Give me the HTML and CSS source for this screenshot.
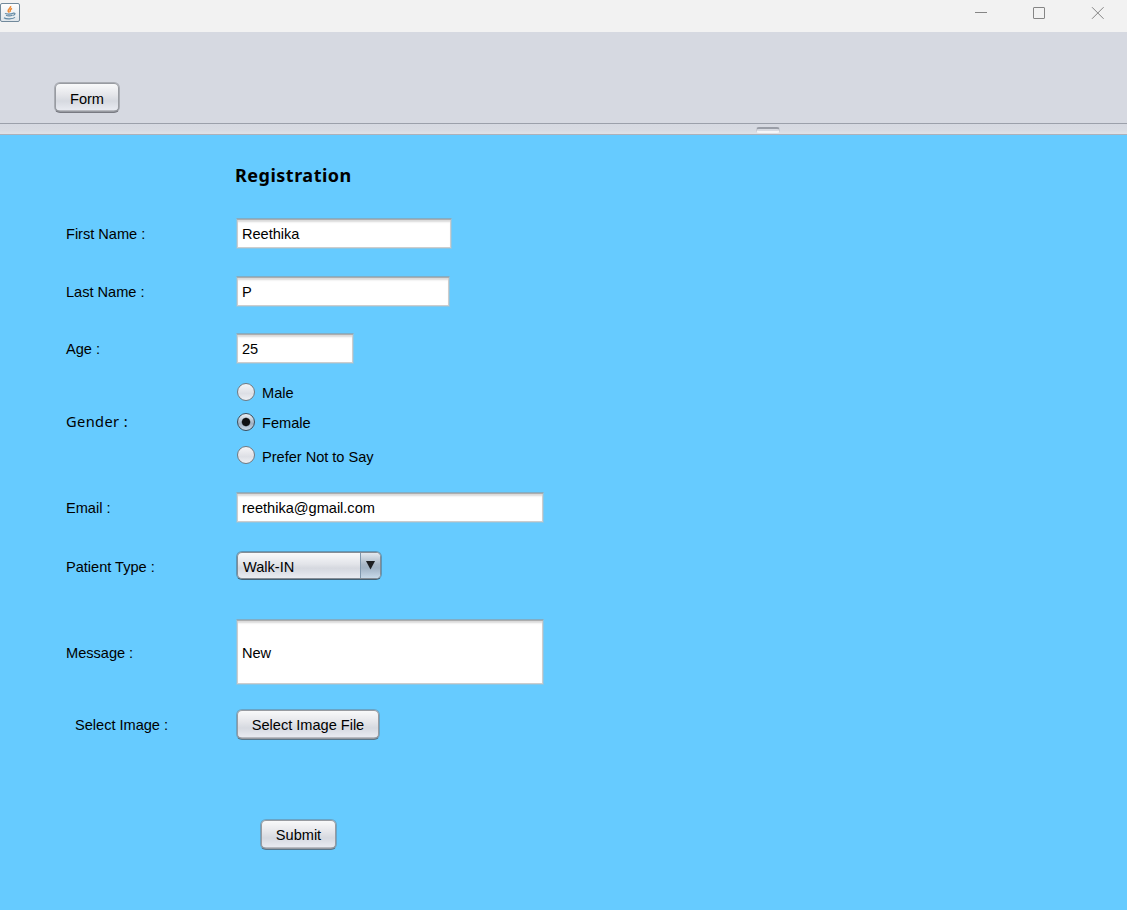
FILE: index.html
```html
<!DOCTYPE html>
<html lang="en">
<head>
<meta charset="utf-8">
<title>Registration</title>
<link rel="stylesheet" href="styles.css">
</head>
<body>
<div class="window">
  <header class="titlebar">
    <svg class="app-icon" width="20" height="20" viewBox="0 0 20 20">
      <defs><linearGradient id="ic" x1="0" y1="0" x2="0" y2="1"><stop offset="0" stop-color="#fff"/><stop offset="1" stop-color="#dfe5ea"/></linearGradient></defs>
      <rect x=".5" y=".5" width="19" height="18" rx="1.5" fill="url(#ic)" stroke="#71899b"/>
      <path d="M10.6 3C11.3 5 7.3 6 8.2 8.3L9.4 9.6M12 5.4C9.8 6.7 9.9 7.8 10.6 8.8" fill="none" stroke="#ee8b37" stroke-width="1.5"/>
      <path d="M5 10.4C6 11.3 11 11.2 13 10.4M13 10.2C16 9.5 15.5 12 12.5 12.5M6 12.3C8 13.3 11 13 12 12.2M4 14.7C6 16.4 13 16.1 15 14.4" fill="none" stroke="#6289a4" stroke-width="1.2"/>
    </svg>
    <svg class="controls" width="131" height="14" viewBox="0 0 131 14" fill="none" stroke="#858585">
      <path d="M0 6.5H12"/>
      <rect x="58.5" y="1.5" width="11" height="11" rx=".5"/>
      <path d="M117 1.2L128.6 12.8M128.6 1.2L117 12.8"/>
    </svg>
  </header>
  <nav class="toolbar"><button class="btn btn-form">Form</button></nav>
  <div class="divider"><span class="grip"></span></div>
  <main class="form">
    <h1 class="title">Registration</h1>
    <div class="row first"><label>First Name :</label><div class="field w-first"><span>Reethika</span></div></div>
    <div class="row last"><label>Last Name :</label><div class="field w-last"><span>P</span></div></div>
    <div class="row age"><label>Age :</label><div class="field w-age"><span>25</span></div></div>
    <div class="row gender">
      <label class="t-gender">Gender :</label>
      <div class="radios">
        <div class="option"><i class="radio"></i><span>Male</span></div>
        <div class="option"><i class="radio checked"></i><span>Female</span></div>
        <div class="option wide"><i class="radio"></i><span>Prefer Not to Say</span></div>
      </div>
    </div>
    <div class="row email"><label>Email :</label><div class="field w-full"><span>reethika@gmail.com</span></div></div>
    <div class="row type"><label>Patient Type :</label>
      <div class="combo"><span class="value">Walk-IN</span><span class="arrow"><svg width="9" height="9" viewBox="0 0 9 9"><path d="M0 0H9L4.5 8.5Z" fill="#1d1f22"/></svg></span></div></div>
    <div class="row message"><label>Message :</label><div class="field tall w-full"><span>New</span></div></div>
    <div class="row image"><label class="indent">Select Image :</label><button class="btn btn-image">Select Image File</button></div>
    <button class="btn btn-submit">Submit</button>
  </main>
</div>
</body>
</html>
```
FILE: styles.css
```css
* { box-sizing: border-box; }
body { margin: 0; font: 14.6px/18px "Liberation Sans", Arial, sans-serif; letter-spacing: -.02px; color: #000; }
.window { width: 1127px; height: 910px; display: flex; flex-direction: column; overflow: hidden; }
.titlebar { height: 32px; background: #f2f2f2; display: flex; justify-content: space-between; align-items: flex-start; }
.app-icon { margin-top: 3px; }
.controls { margin: 6px 21px 0 0; }
.toolbar { height: 91px; background: #d6d9e1; padding: 50px 0 0 54px; }
.btn {
  display: flex; align-items: center; justify-content: center; padding: 2px 0 0; height: 31px;
  font: inherit; letter-spacing: inherit; color: #000; white-space: nowrap;
  border: 1px solid rgba(110, 112, 120, .42); border-bottom-color: rgba(80, 82, 90, .7); border-radius: 6px;
  box-shadow: inset 0 0 0 1px #989ba1, inset 0 -2px 0 -.5px #85888e;
  background: linear-gradient(#fafbfc 0%, #e5e6ea 40%, #d6d9e0 62%, #eceef4 100%) padding-box;
}
.btn-form { width: 66px; }
.divider { height: 12px; background: linear-gradient(#d6d9e1, #d8dbe2 60%, #e0e2e7); border-top: 1px solid #9ba0aa; border-bottom: 1px solid #adb1ba; padding: 3px 0 0 756px; display: flex; }
.grip { width: 24px; height: 6px; border: 1px solid #c8cbd2; border-top: 2px solid #9a9ea7; border-bottom: 2px solid #f6f6f8; border-radius: 3px; }
.form { flex: 1; background: #66cbff; display: flex; flex-direction: column; padding-left: 66px; }
.title { margin: 27px 0 0 169px; font: bold 18px/26px "Noto Sans", sans-serif; letter-spacing: .5px; }
.row { display: flex; align-items: center; height: 31px; flex: none; }
.row label { width: 170px; flex: none; padding-top: 1px; white-space: nowrap; }
.row .indent { padding-left: 9px; }
.first { margin-top: 30px; }
.last { margin-top: 27px; }
.age { margin-top: 26px; }
.field {
  height: 31px; background: #fff padding-box; padding: 0 0 0 5px; display: flex; align-items: center; white-space: nowrap;
  border: 1px solid rgba(190, 190, 190, .4); border-top-color: rgba(150, 150, 150, .55);
  box-shadow: inset 0 1px 0 #adadad, inset 0 0 0 1px #cdcdcd, inset 0 3px 2px #dadada;
}
.tall { height: 66px; padding-top: 1px; }
.w-first { width: 216px; } .w-last { width: 214px; } .w-age { width: 118px; } .w-full { width: 308px; }
.gender { height: 94px; margin-top: 13px; }
.row .t-gender { font: 14.6px/18px "Noto Sans", sans-serif; padding: 0 0 6px; letter-spacing: .4px; }
.radios { height: 94px; padding-left: 1px; }
.option { display: flex; align-items: center; height: 30px; gap: 7px; white-space: nowrap; }
.option span { padding-top: 2px; }
.wide { height: 37px; }
.radio { width: 18px; height: 18px; border-radius: 50%; border: 1.5px solid #74797f; background: linear-gradient(#f5f5f7, #dddfe5 60%, #eef0f4); }
.wide .radio { margin-top: -1px; }
.checked { border-color: #3f4c59; background: radial-gradient(circle, #101214 0 3.6px, transparent 4.8px), linear-gradient(#eef3f8, #9fb0c2 60%, #cbdbe9); }
.email { margin-top: 21px; }
.type { margin-top: 27px; }
.type label { padding-top: 2px; }
.combo { width: 146px; height: 29px; padding: 1px; border: 1px solid rgba(80, 90, 100, .45); border-bottom-color: rgba(55, 63, 74, .75); border-radius: 6px; display: flex; overflow: hidden; box-shadow: inset 0 0 0 1px #868d95; background: linear-gradient(#fafbfc, #e2e4e9 45%, #d5d8df 60%, #eceef3) padding-box; }
.value { flex: 1; padding: 5px 0 0 5px; }
.arrow { width: 20px; padding: 8px 0 0 5px; line-height: 0; border-left: 1px solid #7f97ad; border-radius: 0 4px 4px 0; background: linear-gradient(#e3e9ef, #a9b8c7 45%, #a1b3c5 60%, #c7d9e9); }
.message { height: 66px; margin-top: 38px; }
.message label { padding-top: 1px; }
.image { margin-top: 24px; }
.image .btn, .btn-submit { padding-top: 1px; }
.btn-image { width: 144px; }
.btn-submit { width: 77px; margin: 79px 0 0 194px; }
```
